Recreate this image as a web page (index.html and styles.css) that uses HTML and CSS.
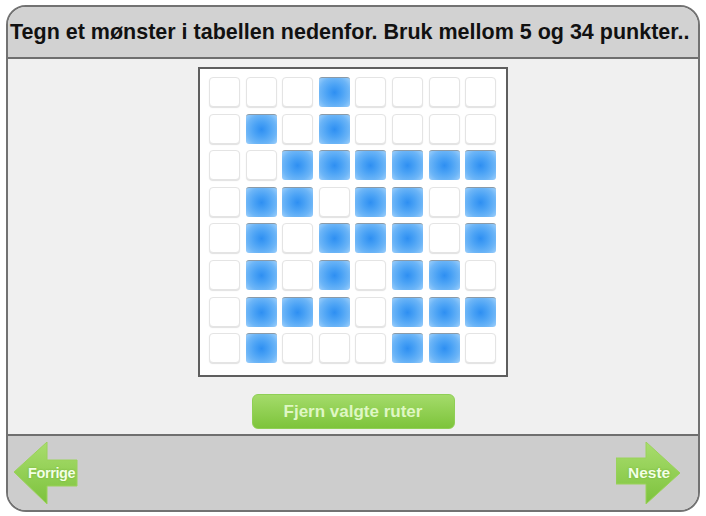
FILE: index.html
```html
<!DOCTYPE html>
<html>
<head>
<meta charset="utf-8">
<link rel="stylesheet" href="styles.css">
</head>
<body>
<div class="frame">
  <div class="header">Tegn et mønster i tabellen nedenfor. Bruk mellom 5 og 34 punkter..</div>
  <div class="main">
    <div class="board">
      <div class="grid" id="grid">
        <div class="cell"></div><div class="cell"></div><div class="cell"></div><div class="cell on"></div><div class="cell"></div><div class="cell"></div><div class="cell"></div><div class="cell"></div>
        <div class="cell"></div><div class="cell on"></div><div class="cell"></div><div class="cell on"></div><div class="cell"></div><div class="cell"></div><div class="cell"></div><div class="cell"></div>
        <div class="cell"></div><div class="cell"></div><div class="cell on"></div><div class="cell on"></div><div class="cell on"></div><div class="cell on"></div><div class="cell on"></div><div class="cell on"></div>
        <div class="cell"></div><div class="cell on"></div><div class="cell on"></div><div class="cell"></div><div class="cell on"></div><div class="cell on"></div><div class="cell"></div><div class="cell on"></div>
        <div class="cell"></div><div class="cell on"></div><div class="cell"></div><div class="cell on"></div><div class="cell on"></div><div class="cell on"></div><div class="cell"></div><div class="cell on"></div>
        <div class="cell"></div><div class="cell on"></div><div class="cell"></div><div class="cell on"></div><div class="cell"></div><div class="cell on"></div><div class="cell on"></div><div class="cell"></div>
        <div class="cell"></div><div class="cell on"></div><div class="cell on"></div><div class="cell on"></div><div class="cell"></div><div class="cell on"></div><div class="cell on"></div><div class="cell on"></div>
        <div class="cell"></div><div class="cell on"></div><div class="cell"></div><div class="cell"></div><div class="cell"></div><div class="cell on"></div><div class="cell on"></div><div class="cell"></div>
      </div>
    </div>
    <button class="clear-btn">Fjern valgte ruter</button>
  </div>
  <div class="footer">
    <div class="nav nav-prev">
      <svg width="64" height="62" viewBox="0 0 64 62">
        <defs>
          <linearGradient id="gl" x1="0" y1="0" x2="0" y2="1">
            <stop offset="0" stop-color="#a9dd6e"/>
            <stop offset="1" stop-color="#7cc23c"/>
          </linearGradient>
        </defs>
        <polygon points="0,30 33,0 33,18 63,18 63,44 33,44 33,62" fill="url(#gl)" stroke="#9ad25a" stroke-width="1"/>
      </svg>
      <span class="nav-label">Forrige</span>
    </div>
    <div class="nav nav-next">
      <svg width="64" height="62" viewBox="0 0 64 62">
        <defs>
          <linearGradient id="gr" x1="0" y1="0" x2="0" y2="1">
            <stop offset="0" stop-color="#a9dd6e"/>
            <stop offset="1" stop-color="#7cc23c"/>
          </linearGradient>
        </defs>
        <polygon points="64,31 30,0 30,16 0,16 0,42 30,42 30,62" fill="url(#gr)" stroke="#9ad25a" stroke-width="1"/>
      </svg>
      <span class="nav-label">Neste</span>
    </div>
  </div>
</div>
</body>
</html>
```

FILE: styles.css
```css
html, body {
  margin: 0;
  padding: 0;
  background: #ffffff;
}
body {
  font-family: "Liberation Sans", Arial, sans-serif;
}
.frame {
  margin: 5px 0 0 6px;
  width: 694px;
  height: 507px;
  box-sizing: border-box;
  border: 2px solid #727272;
  border-radius: 20px;
  overflow: hidden;
  display: flex;
  flex-direction: column;
  background: #efefef;
}
.header {
  flex: none;
  background: #d2d2d2;
  border-bottom: 2px solid #6f6f6f;
  display: flex;
  align-items: center;
  padding-left: 2px;
  padding-top: 1px;
  box-sizing: border-box;
  height: 52px;
  font-weight: bold;
  font-size: 21.5px;
  color: #111;
  white-space: nowrap;
}
.main {
  height: 375px;
  flex: none;
  display: flex;
  flex-direction: column;
  align-items: center;
  padding-top: 8px;
  box-sizing: border-box;
  background: #f0f0f0;
}
.board {
  width: 310px;
  height: 310px;
  box-sizing: border-box;
  border: 2px solid #5e5e5e;
  background: #ffffff;
  padding: 8px 0 0 9px;
}
.grid {
  display: grid;
  grid-template-columns: repeat(8, 31px);
  grid-auto-rows: 30px;
  column-gap: 5.6px;
  row-gap: 6.6px;
}
.cell {
  box-sizing: border-box;
  border: 1px solid #e4e4e4;
  border-radius: 4px;
  background: #ffffff;
  box-shadow: 0 1px 1px rgba(0,0,0,0.12);
}
.cell.on {
  border: none;
  border-top: 1px solid #8a9aa8;
  border-radius: 3px;
  background: radial-gradient(circle at 50% 50%, #2e8ff2 0%, #4aa2f5 35%, #6cb5f7 70%, #9fd0fb 100%);
  box-shadow: none;
}
.clear-btn {
  margin-top: 17px;
  width: 203px;
  height: 35px;
  border: 1px solid #8fcf55;
  border-radius: 6px;
  background: linear-gradient(#a4db6a, #7dc43b);
  color: #dff7c4;
  font-family: "Liberation Sans", Arial, sans-serif;
  font-weight: bold;
  font-size: 17px;
  padding: 0;
}
.footer {
  flex: 1;
  background: #cdcdcd;
  border-top: 2px solid #6f6f6f;
  display: flex;
  justify-content: space-between;
  align-items: center;
  padding: 0 18px 0 6px;
}
.nav {
  position: relative;
  width: 64px;
  height: 62px;
}
.nav svg {
  display: block;
}
.nav-label {
  position: absolute;
  top: 0;
  bottom: 0;
  display: flex;
  align-items: center;
  color: #f2ffe4;
  font-weight: bold;
  font-size: 14.5px;
  text-shadow: 0 0 2px rgba(90,150,30,0.6);
}
.nav-prev .nav-label {
  left: 14px;
  letter-spacing: -0.4px;
}
.nav-next .nav-label {
  left: 12px;
  font-size: 15.5px;
}
```
